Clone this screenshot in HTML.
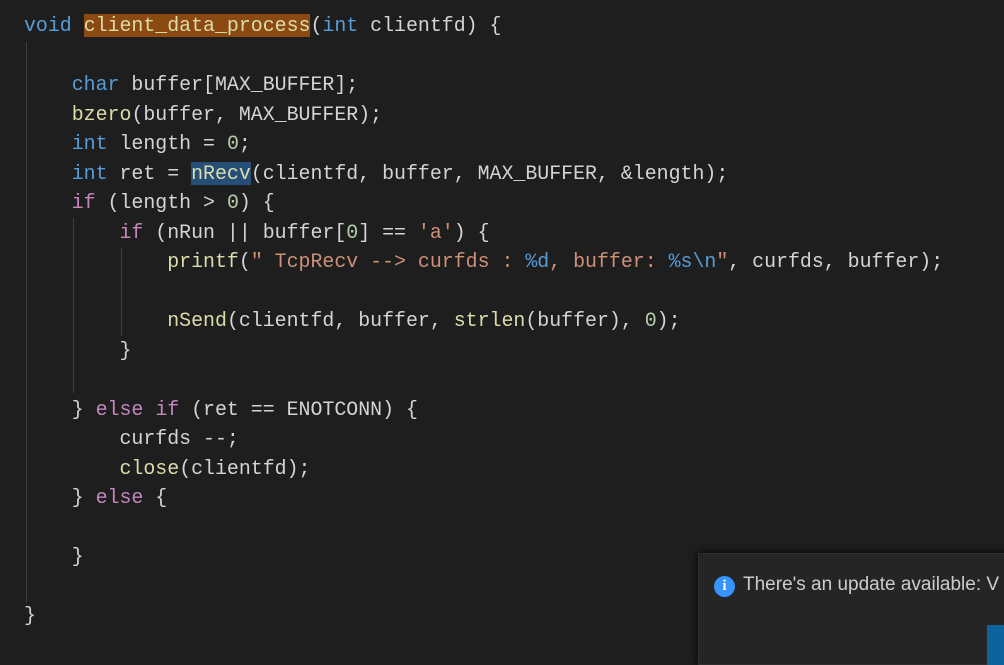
<!DOCTYPE html>
<html><head><meta charset="utf-8"><style>
body{margin:0;width:1004px;height:648px;background:#1e1e1e;overflow:hidden;position:relative;font-family:"Liberation Mono",monospace;}
.code{position:absolute;left:24px;top:11px;font-size:19.9px;line-height:29.5px;color:#d4d4d4;white-space:pre;}
.k{color:#569cd6}.c{color:#c586c0}.f{color:#dcdcaa}.s{color:#ce9178}.n{color:#b5cea8}
.hl{background:#8a4a12}.hb{background:#264f78}
.g{position:absolute;width:1px;background:#404040}
.pop{position:absolute;left:698px;top:553px;width:320px;height:110px;background:#252526;border:1px solid #303030;box-shadow:0 0 8px #000;}
.pop .t{position:absolute;left:44px;top:20px;font-family:"Liberation Sans",sans-serif;font-size:19px;color:#ccc;white-space:nowrap;}
.ic{position:absolute;left:15px;top:22px;width:21px;height:21px;border-radius:50%;background:#3794ff;color:#fff;font:bold 15px "Liberation Serif",serif;text-align:center;line-height:21px;}
.btn{position:absolute;left:288px;top:71px;width:40px;height:40px;background:#0e639c;}
</style></head><body>
<div class="g" style="left:26px;top:42px;height:560px"></div>
<div class="g" style="left:73px;top:218px;height:175px"></div>
<div class="g" style="left:121px;top:248px;height:88px"></div>
<div class="code"><span class="k">void</span> <span class="f hl">client_data_process</span>(<span class="k">int</span> clientfd) {

    <span class="k">char</span> buffer[MAX_BUFFER];
    <span class="f">bzero</span>(buffer, MAX_BUFFER);
    <span class="k">int</span> length = <span class="n">0</span>;
    <span class="k">int</span> ret = <span class="f hb">nRecv</span>(clientfd, buffer, MAX_BUFFER, &amp;length);
    <span class="c">if</span> (length &gt; <span class="n">0</span>) {
        <span class="c">if</span> (nRun || buffer[<span class="n">0</span>] == <span class="s">'a'</span>) {
            <span class="f">printf</span>(<span class="s">" TcpRecv --&gt; curfds : </span><span class="k">%d</span><span class="s">, buffer: </span><span class="k">%s\n</span><span class="s">"</span>, curfds, buffer);

            <span class="f">nSend</span>(clientfd, buffer, <span class="f">strlen</span>(buffer), <span class="n">0</span>);
        }

    } <span class="c">else</span> <span class="c">if</span> (ret == ENOTCONN) {
        curfds --;
        <span class="f">close</span>(clientfd);
    } <span class="c">else</span> {

    }

}</div>
<div class="pop"><div class="ic">i</div><div class="t">There's an update available: V</div><div class="btn"></div></div>
</body></html>
